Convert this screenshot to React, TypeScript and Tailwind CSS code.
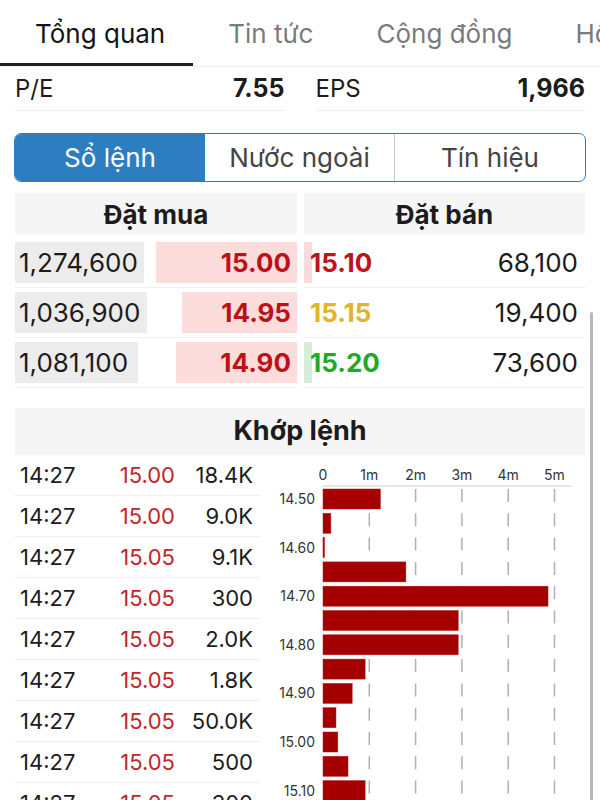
import React from 'react';

const tabs = ['Tổng quan', 'Tin tức', 'Cộng đồng', 'Hồ sơ'];

const bids = [
  { vol: '1,274,600', volW: 129, price: '15.00', barW: 141 },
  { vol: '1,036,900', volW: 132, price: '14.95', barW: 115 },
  { vol: '1,081,100', volW: 123, price: '14.90', barW: 121 },
];

const asks = [
  { price: '15.10', color: '#c0141b', vol: '68,100', barW: 8, barColor: '#fadadb' },
  { price: '15.15', color: '#e0b526', vol: '19,400', barW: 0, barColor: 'transparent' },
  { price: '15.20', color: '#1fa82a', vol: '73,600', barW: 8, barColor: '#d6edd7' },
];

const trades = [
  ['14:27', '15.00', '18.4K'],
  ['14:27', '15.00', '9.0K'],
  ['14:27', '15.05', '9.1K'],
  ['14:27', '15.05', '300'],
  ['14:27', '15.05', '2.0K'],
  ['14:27', '15.05', '1.8K'],
  ['14:27', '15.05', '50.0K'],
  ['14:27', '15.05', '500'],
  ['14:27', '15.05', '300'],
];

// volume by price, in millions
const volumes = [1.24, 0.17, 0.02, 1.79, 4.86, 2.92, 2.92, 0.91, 0.63, 0.28, 0.32, 0.54, 0.91];
const priceLabels = ['14.50', '14.60', '14.70', '14.80', '14.90', '15.00', '15.10'];

function VolumeChart() {
  const x0 = 63;
  const step = 46.3;
  const y0 = 34;
  const pitch = 24.3;
  return (
    <svg width="330" height="345" className="block">
      {[1, 2, 3, 4, 5].map((i) => (
        <line
          key={i}
          x1={x0 + i * step}
          x2={x0 + i * step}
          y1={y0}
          y2={345}
          stroke="#b0b0b0"
          strokeWidth="1.5"
          strokeDasharray="13 11.3"
        />
      ))}
      <line x1={x0 - 1} x2={312} y1={31} y2={31} stroke="#cfcfcf" strokeWidth="1" />
      {['0', '1m', '2m', '3m', '4m', '5m'].map((t, i) => (
        <text
          key={t}
          x={x0 + i * step}
          y={25}
          textAnchor="middle"
          fontSize="14"
          fill="#333"
          fontFamily="Inter, sans-serif"
        >
          {t}
        </text>
      ))}
      {volumes.map((v, i) => (
        <rect
          key={i}
          x={x0}
          y={y0 + i * pitch}
          width={Math.max(v * step, 1.5)}
          height={20}
          fill="#a40000"
          stroke="#b51818"
          strokeWidth="0.5"
        />
      ))}
      {priceLabels.map((p, i) => (
        <text
          key={p}
          x={55}
          y={y0 + i * 2 * pitch + 15}
          textAnchor="end"
          fontSize="14"
          fill="#333"
          fontFamily="Inter, sans-serif"
        >
          {p}
        </text>
      ))}
    </svg>
  );
}

export default function App() {
  return (
    <div className="relative w-[600px] h-[800px] overflow-hidden bg-white font-['Inter',sans-serif] text-[#1c1c1c]">
      {/* top tabs */}
      <div className="relative h-[67px] flex items-center pl-[35px] gap-[63px] text-[26px] whitespace-nowrap border-b border-[#f0f0f0]">
        {tabs.map((t, i) => (
          <span key={t} className={i === 0 ? 'text-[#151515]' : 'text-[#7a7a7a]'}>
            {t}
          </span>
        ))}
        <div className="absolute left-0 bottom-0 w-[193px] h-[3px] bg-[#1d1d1d]" />
      </div>

      {/* P/E, EPS */}
      <div className="h-[44px] flex px-[15px] gap-[31px] text-[24px]">
        <div className="flex-1 flex items-center justify-between border-b border-[#eeeeee]">
          <span>P/E</span>
          <span className="font-bold text-[25px]">7.55</span>
        </div>
        <div className="flex-1 flex items-center justify-between border-b border-[#eeeeee]">
          <span>EPS</span>
          <span className="font-bold text-[25px]">1,966</span>
        </div>
      </div>

      {/* segmented control */}
      <div className="mt-[22px] mx-[14px] h-[49px] flex rounded-[7px] border border-[#2d7ec0] overflow-hidden text-[26px]">
        <div className="w-[190px] flex items-center justify-center bg-[#2d7ec0] text-white">Sổ lệnh</div>
        <div className="w-[190px] flex items-center justify-center text-[#444] border-r border-[#c8c8c8]">Nước ngoài</div>
        <div className="flex-1 flex items-center justify-center text-[#444]">Tín hiệu</div>
      </div>

      {/* order book */}
      <div className="mt-[11px] px-[15px] flex gap-[7px] text-[26px]">
        <div className="w-[282px]">
          <div className="h-[42px] flex items-center justify-center bg-[#f5f5f5] font-bold">Đặt mua</div>
          <div className="mt-[3px]">
            {bids.map((b) => (
              <div key={b.vol} className="h-[50px] flex items-center justify-between border-b border-[#f0f0f0]">
                <div className="h-[41px] flex items-center pl-[4px] bg-[#ececec]" style={{ width: b.volW }}>
                  {b.vol}
                </div>
                <div
                  className="h-[41px] flex items-center justify-end pr-[6px] bg-[#fddcdc] font-bold text-[#bf1018]"
                  style={{ width: b.barW }}
                >
                  {b.price}
                </div>
              </div>
            ))}
          </div>
        </div>
        <div className="w-[281px]">
          <div className="h-[42px] flex items-center justify-center bg-[#f5f5f5] font-bold">Đặt bán</div>
          <div className="mt-[3px]">
            {asks.map((a) => (
              <div key={a.vol} className="h-[50px] flex items-center border-b border-[#f0f0f0]">
                <div className="relative h-[41px] flex-1 flex items-center justify-between pl-[6px] pr-[7px]">
                  <div className="absolute left-0 top-0 h-full" style={{ width: a.barW, background: a.barColor }} />
                  <span className="relative font-bold" style={{ color: a.color }}>
                    {a.price}
                  </span>
                  <span className="relative">{a.vol}</span>
                </div>
              </div>
            ))}
          </div>
        </div>
      </div>

      {/* matched orders */}
      <div className="mt-[20px] mx-[15px] h-[47px] flex items-center justify-center bg-[#f5f5f5] text-[27px] font-bold">
        Khớp lệnh
      </div>
      <div className="flex">
        <div className="ml-[15px] w-[245px] text-[22px]">
          {trades.map((t, i) => (
            <div key={i} className="h-[41px] grid grid-cols-[100px_60px_78px] items-center border-b border-[#efefef]">
              <span className="pl-[5px]">{t[0]}</span>
              <span className="text-right text-[#c0262d]">{t[1]}</span>
              <span className="text-right">{t[2]}</span>
            </div>
          ))}
        </div>
        <VolumeChart />
      </div>

      {/* scroll indicator */}
      <div className="absolute right-[7px] top-[312px] w-[3px] h-[490px] rounded-full bg-[#b8b8b8]" />
    </div>
  );
}
